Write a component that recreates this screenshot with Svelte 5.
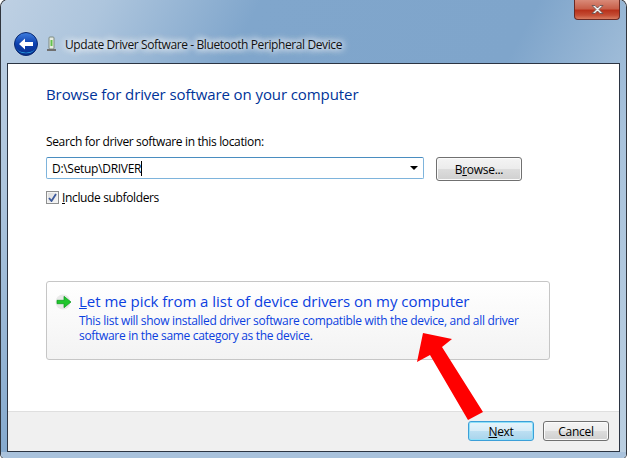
<script>
	let path = 'D:\\Setup\\DRIVER';
	let includeSub = true;
</script>

<div class="window">
	<header class="titlebar">
		<div class="topline">
			<button class="close" aria-label="Close">
				<svg width="15" height="11" viewBox="0 0 15 11"><path d="M2 1.500h3l2.500 2.500 2.500-2.500h3l-4 4 4 4h-3l-2.500-2.500-2.500 2.500h-3l4-4z" fill="#f4f4f4" stroke="#5a4a4a" stroke-width=".8"/></svg>
			</button>
		</div>
		<div class="nav">
			<span class="back">
				<svg width="26" height="26" viewBox="0 0 26 26">
					<defs>
						<linearGradient id="orb" x1="0" y1="0" x2="0" y2="1">
							<stop offset="0" stop-color="#3f7fe0"/>
							<stop offset=".5" stop-color="#0c3fae"/>
							<stop offset="1" stop-color="#0a2f8a"/>
						</linearGradient>
					</defs>
					<circle cx="13" cy="13" r="12.500" fill="#cfdcea" opacity=".7"/>
					<circle cx="13" cy="13" r="11.500" fill="url(#orb)" stroke="#0a2a70"/>
					<path d="M3 17a11 8 0 0 0 20 0a11 9 0 0 1-20 0z" fill="#2fb6f0"/>
					<path d="M6 13l6-5.500v3.500h8v4h-8v3.500z" fill="#fff"/>
				</svg>
			</span>
			<svg class="device" width="11" height="16" viewBox="0 0 11 16">
				<rect x="3" y="1" width="5" height="12" rx="1" fill="#e6ece0" stroke="#7d8a80"/>
				<rect x="4.500" y="4" width="2" height="6" fill="#62c14c"/>
				<rect x="1" y="13" width="9" height="2" fill="#6f6f6f"/>
			</svg>
			<span class="title">Update Driver Software - Bluetooth Peripheral Device</span>
		</div>
	</header>

	<div class="client">
		<main class="content">
			<h1>Browse for driver software on your computer</h1>
			<div class="field-label">Search for driver software in this location:</div>
			<div class="row">
				<div class="combo">
					<span class="value">{path}</span><span class="caret"></span>
					<span class="drop"></span>
				</div>
				<button class="btn browse">B<u>r</u>owse...</button>
			</div>
			<label class="check">
				<span class="box" class:on={includeSub}>
					<svg width="9" height="9" viewBox="0 0 9 9"><path d="M1 5l2.500 3 4.500-7" fill="none" stroke="#3d5a9c" stroke-width="1.800"/></svg>
				</span>
				<span><u>I</u>nclude subfolders</span>
			</label>

			<div class="cmdlink">
				<svg class="go" width="18" height="16" viewBox="0 0 18 16">
					<circle cx="8" cy="8" r="7.500" fill="#e4e4e4" opacity=".8"/>
					<path d="M2 6.300h7v-4l7 5.700-7 5.700v-4h-7z" fill="#1fc62c" stroke="#0c9a1c" stroke-width=".7"/>
				</svg>
				<div class="cmdtext">
					<div class="cmdtitle"><u>L</u>et me pick from a list of device drivers on my computer</div>
					<div class="cmddesc">This list will show installed driver software compatible with the device, and all driver<br>software in the same category as the device.</div>
				</div>
			</div>
		</main>

		<footer class="actions">
			<button class="btn next"><u>N</u>ext</button>
			<button class="btn">Cancel</button>
		</footer>
	</div>

	<svg class="arrow" width="90" height="95" viewBox="0 0 90 95">
		<path d="M13 3L42 9L32 17L73 82L58 90L20 25L7 32z" fill="#ff0000"/>
	</svg>
</div>

<style>
	:global(body) {
		margin: 0;
		background: #fff;
	}

	.window {
		position: relative;
		width: 625px;
		height: 458px;
		box-sizing: border-box;
		padding: 0 6px 6px;
		margin-left: 1px;
		display: flex;
		flex-direction: column;
		border-radius: 7px 7px 4px 4px;
		background:
			linear-gradient(#a9c2dc 0 0) bottom / 100% 6px no-repeat,
			linear-gradient(118deg, #bed0e3 0, #adc5dd 12%, #80a6cc 30%, #7fa5cb 62%, #a9c3dc 80%, #bbcfe1 100%);
		box-shadow: 0 0 0 1px #30353d;
		font-family: "Open Sans", "Noto Sans", sans-serif;
		font-size: 12px;
		color: #000;
	}

	.titlebar {
		height: 63px;
		flex: none;
		display: flex;
		flex-direction: column;
		justify-content: space-between;
	}

	.topline {
		display: flex;
		justify-content: flex-end;
	}

	.close {
		width: 46px;
		height: 20px;
		padding: 0;
		border: 1px solid #6b2a24;
		border-top: 0;
		border-radius: 0 0 4px 4px;
		background: linear-gradient(#d98a78, #c8604a 45%, #b8321c 55%, #c44c34 80%, #d87c60);
		display: flex;
		align-items: center;
		justify-content: center;
	}

	.nav {
		display: flex;
		align-items: center;
		height: 36px;
		margin-bottom: 1px;
		margin-left: 6px;
	}

	.back {
		display: flex;
		width: 26px;
		height: 26px;
		margin-right: 7px;
	}

	.device {
		margin-right: 8px;
	}

	.title {
		letter-spacing: -0.4px;
		color: #111;
		text-shadow: 0 0 6px #fff, 0 0 10px #fff, 0 0 10px #fff;
	}

	.client {
		flex: 1;
		min-height: 0;
		background: #fff;
		border: 1px solid #2b3442;
		display: flex;
		flex-direction: column;
	}

	.content {
		flex: 1;
		padding: 0 38px;
	}

	h1 {
		margin: 20px 0 0;
		font-size: 15px;
		line-height: 21px;
		font-weight: 400;
		letter-spacing: -0.09px;
		color: #003399;
	}

	.field-label {
		margin-top: 28px;
		line-height: 17px;
		letter-spacing: -0.35px;
	}

	.row {
		display: flex;
		align-items: flex-start;
		gap: 12px;
		margin-top: 7px;
	}

	.combo {
		position: relative;
		width: 378px;
		height: 22px;
		box-sizing: border-box;
		border: 1px solid #7eb4dc;
		border-top-color: #4a8dc0;
		border-radius: 2px;
		padding-left: 5px;
		display: flex;
		align-items: center;
		letter-spacing: -0.3px;
	}

	.caret {
		width: 1px;
		height: 15px;
		background: #000;
	}

	.drop {
		position: absolute;
		right: 5px;
		top: 8px;
		border: 4px solid transparent;
		border-top: 4px solid #000;
		border-bottom: 0;
	}

	.btn {
		width: 66px;
		height: 20px;
		padding: 0;
		box-sizing: border-box;
		border: 1px solid #707070;
		border-radius: 3px;
		background: linear-gradient(#f4f4f4, #ececec 48%, #dcdcdc 52%, #d0d0d0);
		box-shadow: inset 0 0 0 1px #fbfbfb;
		font: inherit;
		letter-spacing: -0.3px;
		color: #000;
	}

	.browse {
		width: 86px;
		height: 24px;
	}

	.next {
		border-color: #3c9fd8;
		background: linear-gradient(#e6f4fb, #d6ecf8 48%, #bcdff2 52%, #a9d4ec);
		box-shadow: inset 0 0 0 1px #8fe0f8;
	}

	.check {
		display: flex;
		align-items: center;
		gap: 3px;
		margin-top: 9px;
		height: 14px;
		letter-spacing: -0.36px;
	}

	.box {
		width: 13px;
		height: 13px;
		box-sizing: border-box;
		border: 1px solid #8e8f8f;
		background: linear-gradient(135deg, #dcdcdc, #f6f6f6);
		box-shadow: inset 0 0 0 1px #f4f4f4;
		display: flex;
		align-items: center;
		justify-content: center;
	}

	.cmdlink {
		margin-top: 77px;
		width: 504px;
		height: 79px;
		box-sizing: border-box;
		border: 1px solid #c6c6c6;
		border-radius: 3px;
		background: linear-gradient(#fff, #f3f3f3);
		display: flex;
		align-items: flex-start;
		padding: 11px 0 0 8px;
		gap: 6px;
		color: #0033cc;
	}

	.go {
		margin-top: 1px;
	}

	.cmdtitle {
		font-size: 15px;
		line-height: 17px;
		letter-spacing: -0.03px;
		color: #0b3fe0;
	}

	.cmddesc {
		margin-top: 3px;
		line-height: 15px;
		letter-spacing: -0.31px;
		color: #0b3fe0;
	}

	.actions {
		flex: none;
		height: 40px;
		box-sizing: border-box;
		background: #f0f0f0;
		border-top: 1px solid #dfdfdf;
		display: flex;
		justify-content: flex-end;
		align-items: flex-start;
		gap: 9px;
		padding: 9px 10px 0 0;
	}

	.arrow {
		position: absolute;
		left: 409px;
		top: 330px;
	}
</style>
